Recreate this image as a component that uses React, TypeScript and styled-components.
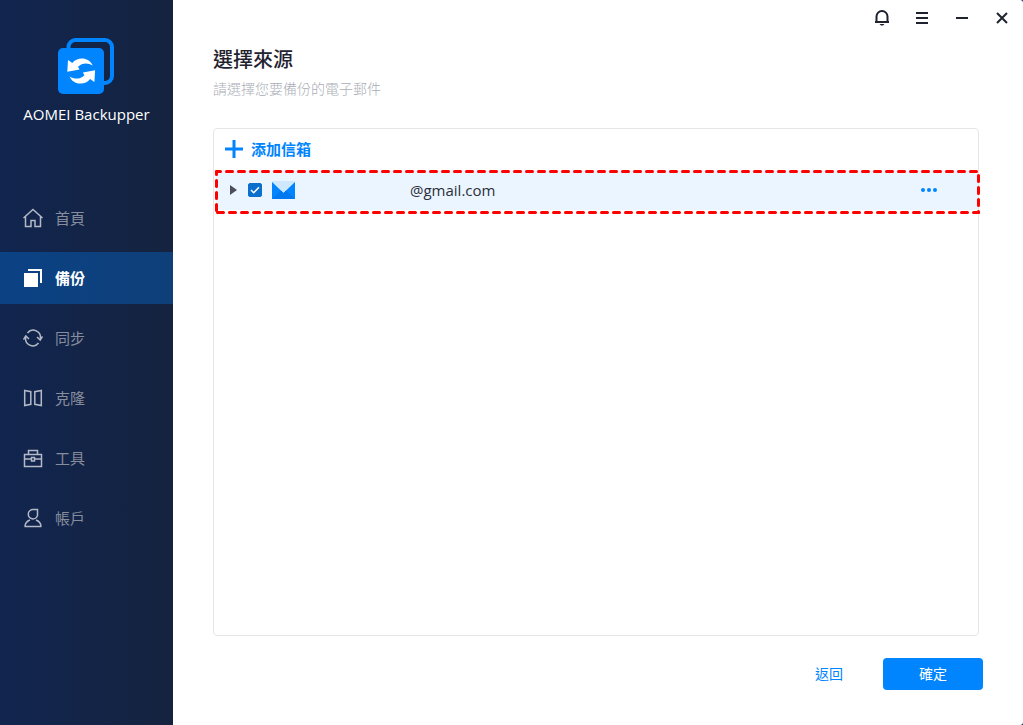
import React from "react";
import styled, { createGlobalStyle, css } from "styled-components";

const GlobalStyle = createGlobalStyle`
  *, *::before, *::after { box-sizing: border-box; }
  body {
    margin: 0;
    background: #14305c;
    font-family: "Open Sans", "Noto Sans CJK TC", sans-serif;
    color: #1f2330;
  }
  button { font-family: inherit; border: 0; padding: 0; background: none; cursor: pointer; }
  h1, p, ul { margin: 0; padding: 0; }
  svg { display: block; flex: none; }
`;

const Window = styled.div`
  display: flex;
  min-height: 100vh;
  background: #fff;
  border-radius: 0 3px 3px 0;
  overflow: hidden;
`;

const Sidebar = styled.aside`
  flex: none;
  width: 173px;
  background: linear-gradient(90deg, #11254f, #15233f);
`;

const Brand = styled.div`
  display: flex;
  flex-direction: column;
  align-items: center;
  gap: 10px;
  padding: 38px 0 68px;
  color: #fff;
  font-size: 15px;
  line-height: 20px;
  white-space: nowrap;
`;

const NavList = styled.ul`
  display: flex;
  flex-direction: column;
  gap: 8px;
  list-style: none;
`;

const NavLink = styled.a<{ $active?: boolean }>`
  display: flex;
  align-items: center;
  gap: 12px;
  height: 52px;
  padding-left: 23px;
  color: #868d9c;
  font-size: 15px;
  line-height: 20px;
  text-decoration: none;
  ${({ $active }) =>
    $active &&
    css`
      background: linear-gradient(90deg, #0b4284, #0e3f79);
      color: #fff;
      font-weight: 700;
    `}
`;

const Main = styled.main`
  flex: 1;
  min-width: 0;
  display: flex;
  flex-direction: column;
`;

const WindowBar = styled.div`
  display: flex;
  justify-content: flex-end;
  gap: 20px;
  height: 36px;
  padding: 8px 11px 0 0;
`;

const BarButton = styled.button`
  width: 20px;
  height: 20px;
  color: #1f2330;
`;

const Content = styled.section`
  flex: 1;
  display: flex;
  flex-direction: column;
  padding: 10px 44px 0 40px;
`;

const Title = styled.h1`
  font-size: 20px;
  font-weight: 500;
  line-height: 28px;
`;

const Subtitle = styled.p`
  margin-top: 4px;
  color: #a9adb5;
  font-size: 14px;
  font-weight: 300;
  line-height: 22px;
`;

const Panel = styled.div`
  flex: 1;
  margin-top: 28px;
  border: 1px solid #e6e6e6;
  border-radius: 4px;
`;

const AddButton = styled.button`
  display: flex;
  align-items: center;
  gap: 8px;
  height: 40px;
  margin-bottom: 1px;
  padding-left: 11px;
  color: #0085ff;
  font-size: 15px;
  font-weight: 700;
  line-height: 20px;
`;

const AccountRow = styled.div`
  position: relative;
  display: flex;
  align-items: center;
  height: 40px;
  margin-left: 2px;
  padding: 0 40px 0 13px;
  background: #eaf5ff;
`;

const Expand = styled.button`
  width: 8px;
  height: 10px;
`;

const Account = styled.label`
  flex: 1;
  display: flex;
  align-items: center;
  font-size: 15px;
  line-height: 20px;
  color: #2b2f3a;
`;

const CheckFrame = styled.span`
  display: grid;
  margin: 0 10px 0 11px;
  & > * {
    grid-area: 1 / 1;
  }
`;

const Check = styled.input`
  appearance: none;
  width: 14px;
  height: 14px;
  margin: 0;
  border: 1px solid #0b6fce;
  border-radius: 2px;
  background: #fff;
  &:checked {
    background: #0b6fce;
  }
`;

const CheckMark = styled.svg`
  pointer-events: none;
`;

const Address = styled.span`
  margin-left: 115px;
`;

const Highlight = styled.svg`
  position: absolute;
  top: 0;
  left: -1px;
  width: 100%;
  height: 44px;
  overflow: visible;
  pointer-events: none;
`;

const Footer = styled.footer`
  display: flex;
  justify-content: flex-end;
  gap: 14px;
  padding: 22px 40px 35px;
`;

const FooterButton = styled.button<{ $primary?: boolean }>`
  width: ${({ $primary }) => ($primary ? "100px" : "80px")};
  height: 32px;
  border-radius: 4px;
  font-size: 14px;
  line-height: 20px;
  color: ${({ $primary }) => ($primary ? "#fff" : "#0085ff")};
  ${({ $primary }) => $primary && "background: #0085ff;"}
`;

const logoArrow = "M9.300 33.700 10 22l4.300 3C19 18.500 31 18.500 34.800 27.500 30 24.500 24 24.500 20 28.800l1.500 2.600Z";

const Logo = () => (
  <svg width="57" height="56" viewBox="0 0 57 56" aria-hidden="true">
    <path d="M10.500 12V9a7 7 0 0 1 7-7H47a7 7 0 0 1 7 7v29a7 7 0 0 1-7 7h-3" fill="none" stroke="#0085ff" strokeWidth="4" />
    <rect y="10" width="46" height="46" rx="5" fill="#0085ff" />
    <g fill="#fff">
      <path d={logoArrow} />
      <path d={logoArrow} transform="rotate(180 23.200 33)" />
    </g>
  </svg>
);

const icons: Record<string, React.ReactNode> = {
  home: <path d="M.5 10 10 1.500l9.500 8.500M2.500 8.500v10H8v-6h4v6h5.500v-10" />,
  backup: (
    <g stroke="none" fill="#fff">
      <path d="M1 5h14v14H1z" />
      <path d="M5 1h14v14h-2V3H5z" />
    </g>
  ),
  sync: (
    <>
      <path d="M4.500 5A7.200 7.200 0 0 1 17.200 11M15.500 15A7.200 7.200 0 0 1 2.800 9" />
      <path d="M14 9l3.200 3L19.500 8.500M.5 11.500 2.800 8 6 11" />
    </>
  ),
  clone: <path d="M1.700 2.500 7.800 3.700v12.600l-6.100 1.200zM18.300 2.500 11.800 3.700v12.600l6.500 1.200z" />,
  tools: <path d="M1.500 6.500h17v12h-17zM5.500 6.500v-4h9v4M1.500 11H8M12 11h6.500M8.500 9.500h3v3.500h-3z" />,
  account: <path d="M14.500 1.500v6A4.700 4.700 0 1 1 10 1.500ZM2 18.500c.2-3.500 2-5.500 5-6.500M18 18.500c-.2-3.500-2-5.500-5-6.500M1.500 18.500h17" />,
};

const NavIcon = ({ name }: { name: string }) => (
  <svg width="20" height="20" viewBox="0 0 20 20" fill="none" stroke="#b4b9c6" strokeWidth="1.500" aria-hidden="true">
    {icons[name]}
  </svg>
);

const BarIcon = ({ children }: { children: React.ReactNode }) => (
  <svg width="20" height="20" viewBox="0 0 20 20" fill="none" stroke="currentColor" strokeWidth="2" aria-hidden="true">
    {children}
  </svg>
);

const navItems = [
  { icon: "home", label: "首頁" },
  { icon: "backup", label: "備份", active: true },
  { icon: "sync", label: "同步" },
  { icon: "clone", label: "克隆" },
  { icon: "tools", label: "工具" },
  { icon: "account", label: "帳戶" },
];

export default function App() {
  return (
    <Window lang="zh-Hant">
      <GlobalStyle />
      <Sidebar>
        <Brand>
          <Logo />
          AOMEI Backupper
        </Brand>
        <nav>
          <NavList>
            {navItems.map(({ icon, label, active }) => (
              <li key={icon}>
                <NavLink href="#" $active={active} aria-current={active ? "page" : undefined}>
                  <NavIcon name={icon} />
                  {label}
                </NavLink>
              </li>
            ))}
          </NavList>
        </nav>
      </Sidebar>
      <Main>
        <WindowBar>
          <BarButton aria-label="通知">
            <BarIcon>
              <path d="M4.500 14V8.500a5.500 5.500 0 0 1 11 0V14M3 14h14" />
              <path d="M7.500 16h5l-1.500 1.500H9z" fill="currentColor" stroke="none" />
            </BarIcon>
          </BarButton>
          <BarButton aria-label="選單">
            <BarIcon><path d="M4 5h12M4 10h12M4 15h12" /></BarIcon>
          </BarButton>
          <BarButton aria-label="最小化">
            <BarIcon><path d="M4 10h12" /></BarIcon>
          </BarButton>
          <BarButton aria-label="關閉">
            <BarIcon><path d="M5 5l10 10M15 5 5 15" /></BarIcon>
          </BarButton>
        </WindowBar>
        <Content>
          <Title>選擇來源</Title>
          <Subtitle>請選擇您要備份的電子郵件</Subtitle>
          <Panel>
            <AddButton>
              <svg width="18" height="18" viewBox="0 0 18 18" stroke="currentColor" strokeWidth="3" aria-hidden="true">
                <path d="M9 0v18M0 9h18" />
              </svg>
              添加信箱
            </AddButton>
            <AccountRow>
              <Expand aria-label="展開">
                <svg width="8" height="10" viewBox="0 0 8 10" aria-hidden="true"><path d="M1 0 8 5 1 10z" fill="#4c4f5a" /></svg>
              </Expand>
              <Account>
                <CheckFrame>
                  <Check type="checkbox" defaultChecked />
                  <CheckMark width="14" height="14" viewBox="0 0 14 14" fill="none" stroke="#fff" strokeWidth="1.500" aria-hidden="true">
                    <path d="M3 7l2.700 2.700L11 4.300" />
                  </CheckMark>
                </CheckFrame>
                <svg width="23" height="18" viewBox="0 0 23 18" aria-hidden="true">
                  <path d="M0 0h23v18H0z" fill="#cfe8fd" />
                  <path d="M0 1 11.500 12 23 1v17H0z" fill="#0085ff" />
                  <path d="M0 18 9 9.600l2.500 2.400L14 9.600l9 8.400z" fill="#0078f0" />
                </svg>
                <Address>@gmail.com</Address>
              </Account>
              <button aria-label="更多">
                <svg width="18" height="6" viewBox="0 0 18 6" fill="#0085ff" aria-hidden="true">
                  <circle cx="3" cy="3" r="2" /><circle cx="9" cy="3" r="2" /><circle cx="15" cy="3" r="2" />
                </svg>
              </button>
              <Highlight aria-hidden="true">
                <svg x="1.500" y="1.500" width="100%" height="41" overflow="visible">
                  <g stroke="#ff0000" strokeWidth="3" strokeLinecap="round" strokeDasharray="6 6">
                    <line x1="0" y1="0" x2="100%" y2="0" strokeDashoffset="2" />
                    <line x1="0" y1="41" x2="100%" y2="41" strokeDashoffset="11" />
                    <line x1="0" y1="0" x2="0" y2="41" strokeDashoffset="3" />
                    <line x1="100%" y1="0" x2="100%" y2="41" strokeDashoffset="8" />
                  </g>
                </svg>
              </Highlight>
            </AccountRow>
          </Panel>
        </Content>
        <Footer>
          <FooterButton>返回</FooterButton>
          <FooterButton $primary>確定</FooterButton>
        </Footer>
      </Main>
    </Window>
  );
}
